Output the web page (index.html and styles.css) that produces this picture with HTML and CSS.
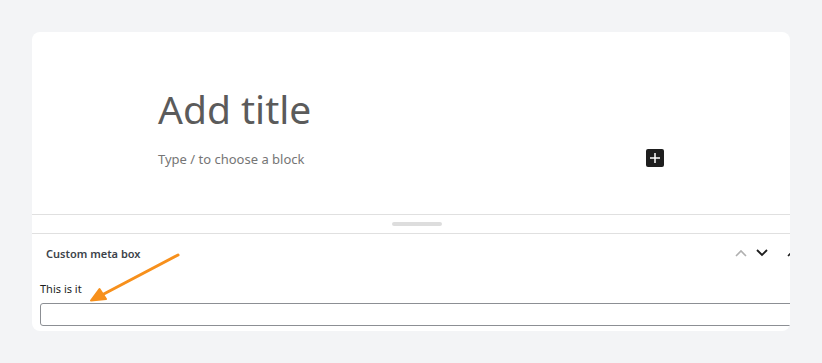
FILE: index.html
```html
<!DOCTYPE html>
<html lang="en">
<head>
    <meta charset="UTF-8">
    <title>Edit Post</title>
    <link rel="stylesheet" href="styles.css">
</head>
<body>
    <div class="card">
        <div class="panel">
            <div class="editor">
                <div class="title">Add title</div>
                <div class="block-row">
                    <span class="placeholder">Type / to choose a block</span>
                    <span class="add-btn">
                        <svg width="10" height="10" viewBox="0 0 10 10"><path d="M5 0v10M0 5h10" stroke="#fff" stroke-width="1.5"/></svg>
                    </span>
                </div>
            </div>
            <div class="resizer"><span class="handle"></span></div>
            <div class="metabox">
                <div class="metabox-head">
                    <span class="metabox-title">Custom meta box</span>
                    <div class="metabox-actions">
                        <span class="act up"><svg width="12" height="8" viewBox="0 0 12 8"><path d="M1 7l5-5 5 5" fill="none" stroke="#b0b0b0" stroke-width="1.6"/></svg></span>
                        <span class="act"><svg width="12" height="8" viewBox="0 0 12 8"><path d="M1 1l5 5 5-5" fill="none" stroke="#1e1e1e" stroke-width="1.8"/></svg></span>
                        <span class="act toggle"><svg width="12" height="8" viewBox="0 0 12 8"><path d="M1 7l5-5 5 5" fill="none" stroke="#1e1e1e" stroke-width="1.6"/></svg></span>
                    </div>
                </div>
                <div class="metabox-body">
                    <label class="field-label" for="meta">This is it</label>
                    <input type="text" id="meta" class="field-input">
                </div>
            </div>
        </div>
        <svg class="arrow" width="200" height="80" viewBox="0 0 200 80">
            <path d="M146 5L68 46" stroke="#f7901c" stroke-width="3" stroke-linecap="round"/>
            <path d="M59 50.5l15 -1.5l-6.5 -10z" fill="#f7901c" stroke="#f7901c" stroke-width="2" stroke-linejoin="round"/>
        </svg>
    </div>
</body>
</html>
```

FILE: styles.css
```css
body {
    margin: 0;
    padding: 32px;
    background: #f3f4f6;
    font-family: "Noto Sans", "Open Sans", sans-serif;
    color: #1e1e1e;
}
.card {
    position: relative;
    width: 758px;
    height: 299px;
    background: #fff;
    border-radius: 8px;
    overflow: hidden;
}
.panel {
    width: 770px;
}
.editor {
    height: 182px;
    padding: 51px 0 0 126px;
    box-sizing: border-box;
}
.title {
    font-size: 39px;
    line-height: 52px;
    color: #5b5b5b;
}
.block-row {
    width: 506px;
    display: flex;
    justify-content: space-between;
    align-items: center;
    margin-top: 12px;
}
.placeholder {
    font-size: 13px;
    color: #757575;
    padding-top: 3px;
}
.add-btn {
    width: 18px;
    height: 18px;
    background: #1e1e1e;
    border-radius: 2px;
    display: flex;
    align-items: center;
    justify-content: center;
}
.resizer {
    height: 18px;
    border-top: 1px solid #e0e0e0;
    border-bottom: 1px solid #e0e0e0;
    display: flex;
    align-items: center;
    justify-content: center;
}
.handle {
    width: 50px;
    height: 4px;
    border-radius: 2px;
    background: #dddddd;
}
.metabox-head {
    height: 38px;
    display: flex;
    align-items: center;
    justify-content: space-between;
    padding: 0 0 0 14px;
}
.metabox-title {
    font-size: 11px;
    font-weight: 600;
    color: #3c434a;
}
.metabox-actions {
    display: flex;
}
.act {
    width: 22px;
    height: 24px;
    display: flex;
    align-items: center;
    justify-content: center;
}
.act.up {
    width: 20px;
}
.act.toggle {
    width: 18px;
    margin-left: 11px;
}
.metabox-body {
    padding: 9px 8px 0;
}
.field-label {
    display: block;
    font-size: 11px;
    color: #1e1e1e;
    margin-bottom: 7px;
}
.field-input {
    display: block;
    width: 100%;
    height: 23px;
    box-sizing: border-box;
    border: 1px solid #8c8f94;
    border-radius: 3px;
    margin: 0;
}
.arrow {
    position: absolute;
    left: 0;
    top: 218px;
}
```
